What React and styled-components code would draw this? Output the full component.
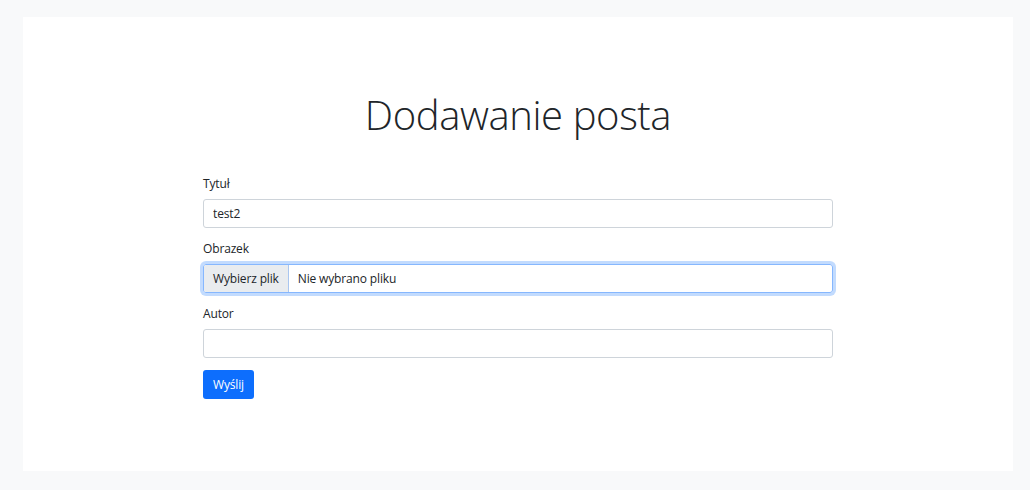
import React from 'react'
import styled, { createGlobalStyle } from 'styled-components'

const GlobalStyle = createGlobalStyle`
    body {
        margin: 0;
        background: #f8f9fa;
        font-family: 'Open Sans', 'Noto Sans', sans-serif;
        color: #212529;
    }
`

const Page = styled.div`
    padding: 17px 17px 19px 23px;
`

const Card = styled.main`
    background: #fff;
    height: 454px;
    box-sizing: border-box;
    padding-top: 74px;
    display: flex;
    flex-direction: column;
    align-items: center;
`

const Title = styled.h1`
    margin: 0 0 35px;
    font-size: 40px;
    font-weight: 300;
    line-height: 1.2;
    letter-spacing: -0.4px;
`

const Form = styled.form`
    width: 630px;
    font-size: 12px;
    letter-spacing: -0.15px;
`

const Group = styled.div`
    margin-bottom: 11px;
`

const Label = styled.label`
    display: block;
    line-height: 20px;
    margin-bottom: 5px;
`

const Input = styled.input`
    display: block;
    width: 100%;
    box-sizing: border-box;
    height: 29px;
    padding: 0 9px;
    font: inherit;
    letter-spacing: inherit;
    color: #212529;
    border: 1px solid #ced4da;
    border-radius: 3px;
    outline: none;
`

const FileBox = styled.div`
    display: flex;
    height: 29px;
    box-sizing: border-box;
    border: 1px solid #86b7fe;
    border-radius: 3px;
    box-shadow: 0 0 0 3px rgba(13, 110, 253, 0.25);
    overflow: hidden;
`

const FileButton = styled.span`
    display: flex;
    align-items: center;
    padding: 0 9px;
    background: #e9ecef;
    border-right: 1px solid #a9c6f0;
`

const FileName = styled.span`
    display: flex;
    align-items: center;
    padding: 0 9px;
`

const Submit = styled.button`
    margin-top: 1px;
    height: 29px;
    padding: 0 10px;
    background: #0d6efd;
    color: #fff;
    border: none;
    border-radius: 3px;
    font: inherit;
    letter-spacing: inherit;
`

const App = () => {
    return (
        <Page>
            <GlobalStyle />
            <Card>
                <Title>Dodawanie posta</Title>
                <Form onSubmit={e => e.preventDefault()}>
                    <Group>
                        <Label>Tytuł</Label>
                        <Input defaultValue="test2" />
                    </Group>
                    <Group>
                        <Label>Obrazek</Label>
                        <FileBox>
                            <FileButton>Wybierz plik</FileButton>
                            <FileName>Nie wybrano pliku</FileName>
                        </FileBox>
                    </Group>
                    <Group>
                        <Label>Autor</Label>
                        <Input />
                    </Group>
                    <Submit type="submit">Wyślij</Submit>
                </Form>
            </Card>
        </Page>
    )
}

export default App
